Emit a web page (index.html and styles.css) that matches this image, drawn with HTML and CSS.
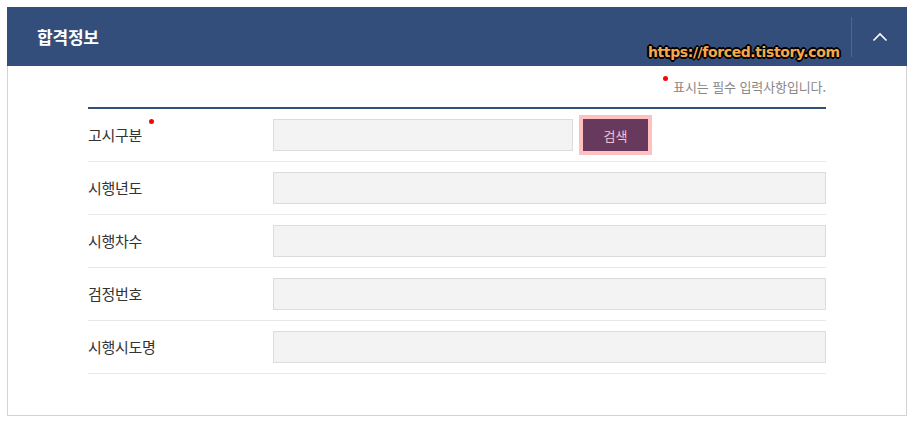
FILE: index.html
```html
<!DOCTYPE html>
<html lang="ko">
<head>
<meta charset="utf-8">
<title>합격정보</title>
<link rel="stylesheet" href="styles.css">
</head>
<body>
<section class="panel">
  <header class="panel-head">
    <h2 class="panel-title">합격정보</h2>
    <button class="toggle" type="button" aria-label="접기">
      <svg width="16" height="10" viewBox="0 0 16 10"><path d="M1.5 8.5 L8 2 L14.5 8.5" fill="none" stroke="#fff" stroke-width="1.6"/></svg>
    </button>
    <span class="watermark">https://forced.tistory.com</span>
  </header>
  <div class="panel-body">
    <p class="note"><span class="req-dot"></span>표시는 필수 입력사항입니다.</p>
    <div class="form">
      <div class="row">
        <div class="label">고시구분<span class="req-dot sup"></span></div>
        <div class="field">
          <input class="input short" type="text">
          <button class="btn-search" type="button">검색</button>
        </div>
      </div>
      <div class="row">
        <div class="label">시행년도</div>
        <div class="field"><input class="input" type="text"></div>
      </div>
      <div class="row">
        <div class="label">시행차수</div>
        <div class="field"><input class="input" type="text"></div>
      </div>
      <div class="row">
        <div class="label">검정번호</div>
        <div class="field"><input class="input" type="text"></div>
      </div>
      <div class="row">
        <div class="label">시행시도명</div>
        <div class="field"><input class="input" type="text"></div>
      </div>
    </div>
  </div>
</section>
</body>
</html>
```

FILE: styles.css
```css
* { box-sizing: border-box; }
html, body { margin: 0; padding: 0; background: #fff; }
body {
  padding: 7px 8px 10px 7px;
  font-family: "Noto Sans CJK KR", "Noto Sans", sans-serif;
  color: #333;
}
.panel { width: 900px; }
.panel-head {
  position: relative;
  height: 59px;
  background: #344e7b;
  display: flex;
  align-items: center;
  padding-left: 30px;
}
.panel-title {
  margin: 0;
  flex: 1;
  font-size: 17px;
  font-weight: 700;
  color: #fff;
  line-height: 20px;
  letter-spacing: -0.2px;
}
.toggle {
  width: 56px;
  height: 40px;
  border: 0;
  border-left: 1px solid rgba(255,255,255,0.14);
  background: transparent;
  padding: 0;
  display: flex;
  align-items: center;
  justify-content: center;
  cursor: pointer;
}
.watermark {
  position: absolute;
  left: 641px;
  top: 36px;
  font-family: "DejaVu Sans", sans-serif;
  font-weight: 700;
  font-size: 14px;
  line-height: 18px;
  color: #f6a94c;
  letter-spacing: -0.4px;
  text-shadow: -1px -1px 0 #000, 1px -1px 0 #000, -1px 1px 0 #000, 1px 1px 0 #000, 0 -2px 0 #000, 0 2px 0 #000, -2px 0 0 #000, 2px 0 0 #000;
}
.panel-body {
  height: 350px;
  border: 1px solid #d3d3d3;
  border-top: 0;
  padding: 12px 80px 0 80px;
}
.note {
  margin: 0 0 11px;
  text-align: right;
  font-size: 13px;
  line-height: 18px;
  color: #888;
  letter-spacing: -0.1px;
}
.req-dot {
  display: inline-block;
  width: 5px;
  height: 5px;
  border-radius: 50%;
  background: #f00;
  vertical-align: top;
  margin: -2px 5px 0 0;
}
.req-dot.sup { margin: -6px 0 0 7px; }
.form { border-top: 2px solid #344e7b; }
.row {
  display: flex;
  align-items: center;
  padding: 10px 0;
  border-bottom: 1px solid #e8e8e8;
}
.label {
  width: 185px;
  font-size: 15px;
  line-height: 20px;
  color: #333;
  letter-spacing: -0.3px;
}
.field { flex: 1; display: flex; align-items: center; }
.input {
  width: 100%;
  height: 32px;
  background: #f3f3f3;
  border: 1px solid #dcdcdc;
  margin: 0;
  padding: 0 8px;
}
.input.short { width: 300px; }
.btn-search {
  margin-left: 10px;
  width: 65px;
  height: 32px;
  border: 0;
  background: #673a5d;
  color: #f3c2d6;
  font-family: inherit;
  font-size: 13px;
  box-shadow: 0 0 0 4px #ffc0c2;
  cursor: pointer;
}
```
